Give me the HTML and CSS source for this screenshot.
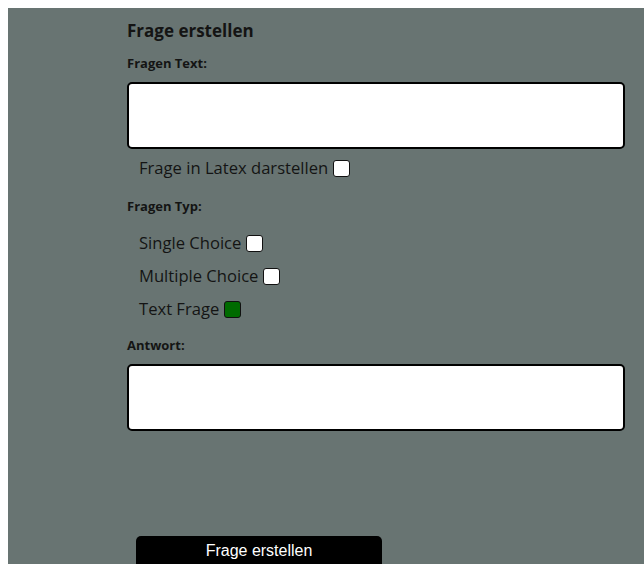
FILE: index.html
```html
<!DOCTYPE html>
<html lang="de">
<head>
<meta charset="utf-8">
<title>Frage erstellen</title>
<link rel="stylesheet" href="styles.css">
</head>
<body>
<main class="panel">
  <form class="question-form">
    <h3 class="form-title">Frage erstellen</h3>

    <h5 class="field-label">Fragen Text:</h5>
    <textarea class="text-input"></textarea>

    <label class="check-row latex-row">
      <span>Frage in Latex darstellen</span>
      <input type="checkbox" class="box">
    </label>

    <h5 class="field-label type-label">Fragen Typ:</h5>
    <div class="type-list">
      <label class="check-row">
        <span>Single Choice</span>
        <input type="checkbox" class="box">
      </label>
      <label class="check-row">
        <span>Multiple Choice</span>
        <input type="checkbox" class="box">
      </label>
      <label class="check-row">
        <span>Text Frage</span>
        <input type="checkbox" class="box" checked>
      </label>
    </div>

    <h5 class="field-label answer-label">Antwort:</h5>
    <textarea class="text-input"></textarea>

    <button type="button" class="submit">Frage erstellen</button>
  </form>
</main>
</body>
</html>
```

FILE: styles.css
```css
html, body {
  overflow: hidden;
}

body {
  margin: 8px 0 0 8px;
  background: #ffffff;
  font-family: "Open Sans", "Noto Sans", sans-serif;
  color: #141414;
}

.panel {
  background: #687472;
  min-height: 600px;
  padding: 10px 0 0 119px;
}

.question-form {
  display: flex;
  flex-direction: column;
  align-items: flex-start;
  width: 498px;
}

.form-title {
  margin: 0;
  font-size: 17px;
  line-height: 26px;
  font-weight: 700;
}

.field-label {
  margin: 11px 0 0;
  font-size: 13px;
  line-height: 16px;
  font-weight: 700;
}

.text-input {
  box-sizing: border-box;
  width: 498px;
  height: 67px;
  margin: 11px 0 0;
  border: 2px solid #000;
  border-radius: 5px;
  background: #fff;
  resize: none;
}

.check-row {
  display: flex;
  align-items: center;
  gap: 5px;
  padding-left: 12px;
  font-size: 16.6px;
  line-height: 22px;
}

.latex-row {
  margin-top: 8px;
}

.type-label {
  margin-top: 19px;
}

.type-list {
  display: flex;
  flex-direction: column;
  gap: 11px;
  margin-top: 18px;
}

.box {
  appearance: none;
  box-sizing: border-box;
  width: 17px;
  height: 17px;
  margin: 0;
  border: 1px solid #111;
  border-radius: 3px;
  background: #fff;
}

.box:checked {
  background: #006b00;
}

.answer-label {
  margin-top: 17px;
}

.submit {
  margin: 105px 0 0 9px;
  width: 246px;
  height: 40px;
  padding: 0 0 10px;
  border: none;
  border-radius: 5px;
  background: #000;
  color: #fff;
  font-family: "Liberation Sans", Arial, sans-serif;
  font-size: 16px;
}
```
